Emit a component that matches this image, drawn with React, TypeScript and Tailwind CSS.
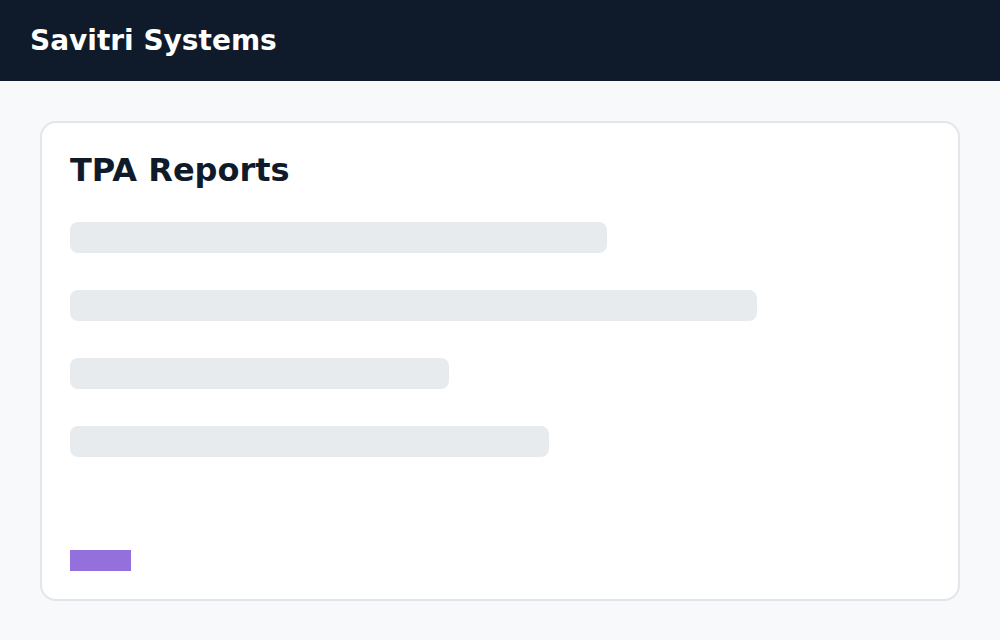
export default function App() {
  const bars = [537, 687, 379, 479];

  return (
    <div className="min-h-screen bg-[#f7f9fb] font-['DejaVu_Sans',sans-serif]">
      <header className="flex h-[80.6px] items-center bg-[#0f1b2b] px-[30px] pt-[2px]">
        <span className="text-[28px] font-bold leading-none text-white">Savitri Systems</span>
      </header>

      <main className="p-10">
        <div className="flex h-[480px] flex-col rounded-2xl border-2 border-[#e2e6ea] bg-white px-7 pt-7 pb-[28px]">
          <h1 className="text-[32px] font-bold leading-[38px] text-[#0f1b2b]">TPA Reports</h1>

          <div className="mt-[33px] flex flex-col gap-[37px]">
            {bars.map((w, i) => (
              <div key={i} className="h-[31px] rounded-lg bg-[#e8ebee]" style={{ width: w }} />
            ))}
          </div>

          <div className="mt-auto h-[21px] w-[61px] bg-[#9370db]" />
        </div>
      </main>
    </div>
  );
}
